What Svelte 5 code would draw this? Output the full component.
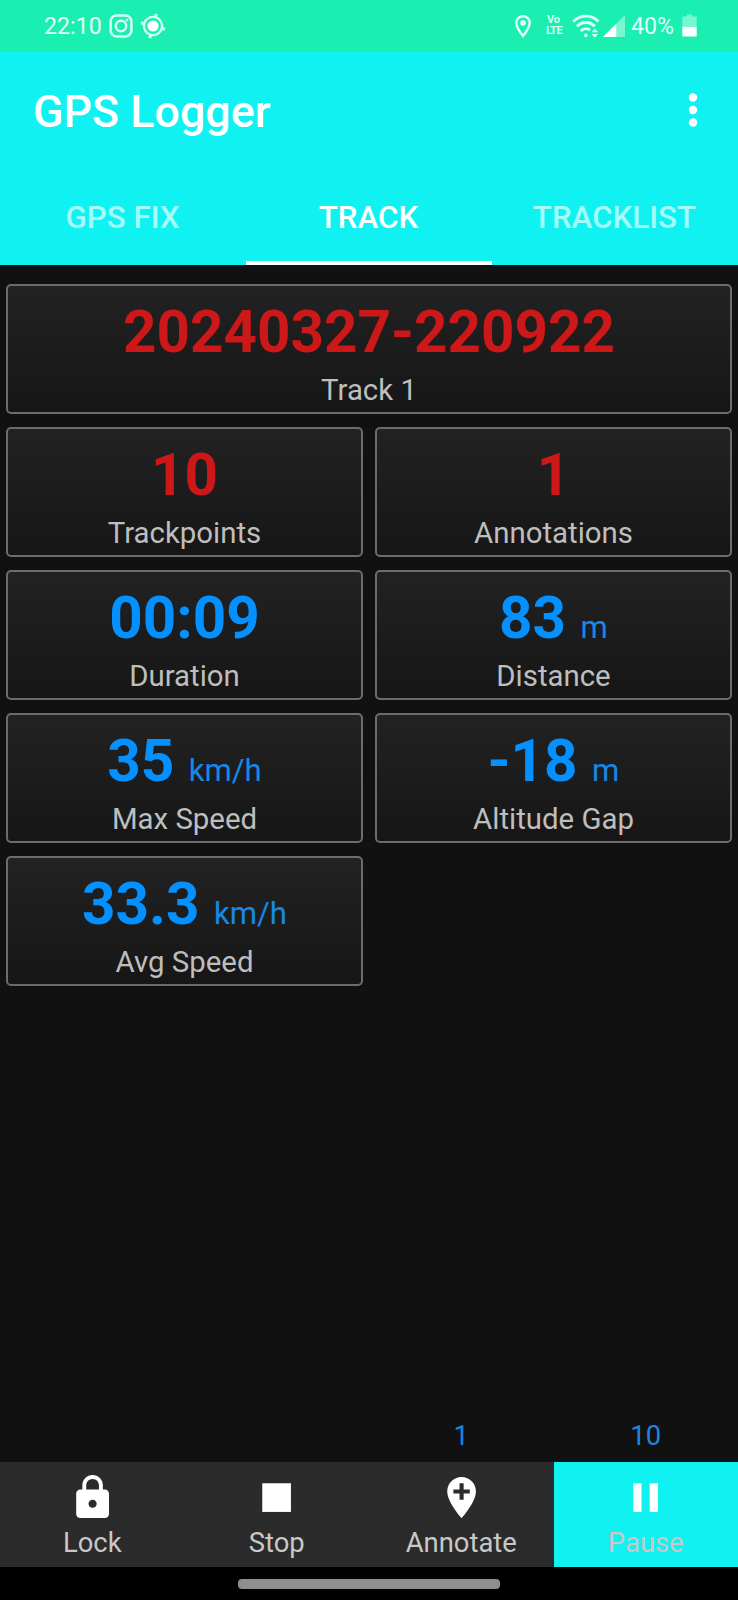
<script>
  const tabs = ['GPS FIX', 'TRACK', 'TRACKLIST'];
  const active = 'TRACK';

  const tiles = [
    { value: '20240327-220922', label: 'Track 1', tone: 'red', wide: true },
    { value: '10', label: 'Trackpoints', tone: 'red' },
    { value: '1', label: 'Annotations', tone: 'red' },
    { value: '00:09', label: 'Duration' },
    { value: '83', unit: 'm', label: 'Distance' },
    { value: '35', unit: 'km/h', label: 'Max Speed' },
    { value: '-18', unit: 'm', label: 'Altitude Gap' },
    { value: '33.3', unit: 'km/h', label: 'Avg Speed' }
  ];

  const actions = [
    {
      label: 'Lock',
      path: 'M18 8h-1V6c0-2.76-2.24-5-5-5S7 3.24 7 6v2H6c-1.1 0-2 .9-2 2v10c0 1.1.9 2 2 2h12c1.1 0 2-.9 2-2V10c0-1.1-.9-2-2-2zm-6 9c-1.1 0-2-.9-2-2s.9-2 2-2 2 .9 2 2-.9 2-2 2zm3.1-9H8.9V6c0-1.71 1.39-3.1 3.1-3.1s3.1 1.39 3.1 3.1v2z'
    },
    { label: 'Stop', path: 'M5 5h14v14H5z' },
    {
      label: 'Annotate',
      count: '1',
      path: 'M12 2C8.13 2 5 5.13 5 9c0 5.25 7 13 7 13s7-7.75 7-13c0-3.87-3.13-7-7-7zm4 8h-3v3h-2v-3H8V8h3V5h2v3h3v2z'
    },
    { label: 'Pause', count: '10', on: true, path: 'M6 19h4V5H6v14zm8-14v14h4V5h-4z' }
  ];
</script>

<div class="screen">
  <div class="status">
    <div class="group">
      <span class="stext">22:10</span>
      <svg class="insta" width="24" height="24" viewBox="0 0 24 24" fill="none" stroke="#d6fff3" stroke-width="2.5">
        <rect x="1.6" y="1.6" width="20.8" height="20.8" rx="5.8" />
        <circle cx="12" cy="12" r="5.2" />
        <circle cx="18" cy="6" r="1.5" fill="#d6fff3" stroke="none" />
      </svg>
      <svg width="26" height="26" viewBox="-13 -13 26 26">
        <g transform="rotate(15)" stroke="#d6fff3">
          <circle r="9.1" fill="none" stroke-width="2.3" />
          <path d="M0-12.5v3M0 12.5v-3M-12.5 0h3M12.5 0h-3" stroke-width="3" />
        </g>
        <circle r="5.6" fill="#fff" />
      </svg>
    </div>
    <div class="group">
      <svg class="pin" width="16" height="24" viewBox="0 0 16 24">
        <path d="M8 2.2c-3.900 0-6.700 2.900-6.700 6.600C1.300 13.600 8 22 8 22s6.700-8.400 6.700-13.200c0-3.700-2.800-6.600-6.700-6.600z" fill="none" stroke="#e0fff6" stroke-width="2.4" />
        <circle cx="8" cy="8.800" r="2.900" fill="#e0fff6" />
      </svg>
      <span class="volte"><b>Vo</b><b>LTE</b></span>
      <svg class="wifi" width="28" height="24" viewBox="0 0 28 24">
        <g fill="none" stroke="#e0fff6" stroke-width="2.9">
          <path d="M1.400 7.400a17.500 17.500 0 0 1 25 0" />
          <path d="M5 12.300a12.300 12.300 0 0 1 17.800 0" />
          <path d="M8.800 17a7.400 7.400 0 0 1 9.200-1" />
        </g>
        <circle cx="13.800" cy="21.400" r="1.800" fill="#e0fff6" />
        <path d="M19.600 18.300l3.200-3.700 3.200 3.700zM19.600 20l3.200 3.700 3.200-3.700z" fill="#e0fff6" />
      </svg>
      <svg class="signal" width="22" height="22" viewBox="0 0 22 22">
        <path d="M22 0v22H0z" fill="#79f6d0" />
        <path d="M13.300 8.700V22H0z" fill="#fff" />
      </svg>
      <span class="stext">40%</span>
      <svg class="battery" width="15" height="23" viewBox="0 0 15 23">
        <path d="M.3 2.500H5V.5h5v2h4.700V13H.3z" fill="#79f6d0" />
        <path d="M.3 13h14.400v9.500H.3z" fill="#fff" />
      </svg>
    </div>
  </div>

  <header>
    <div class="toolbar">
      <h1>GPS Logger</h1>
      <svg width="10" height="36" viewBox="0 0 10 36" fill="#fff">
        <circle cx="5" cy="5.500" r="4.200" />
        <circle cx="5" cy="18" r="4.200" />
        <circle cx="5" cy="30.500" r="4.200" />
      </svg>
    </div>
    <nav class="tabs">
      {#each tabs as tab}
        <div class="tab" class:active={tab === active}>{tab}</div>
      {/each}
    </nav>
  </header>

  <main>
    {#each tiles as tile}
      <section class="tile {tile.tone ?? 'blue'}" class:wide={tile.wide}>
        <div class="reading">
          <span class="value">{tile.value}</span>{#if tile.unit}<span class="unit">{tile.unit}</span>{/if}
        </div>
        <div class="label">{tile.label}</div>
      </section>
    {/each}
  </main>

  <div class="counts">
    {#each actions as action}
      <span>{action.count ?? ''}</span>
    {/each}
  </div>

  <footer>
    {#each actions as action}
      <div class="action" class:on={action.on}>
        <svg width="49.2" height="49.2" viewBox="0 0 24 24" fill="#fff"><path d={action.path} /></svg>
        <span>{action.label}</span>
      </div>
    {/each}
  </footer>

  <div class="gesture"><i></i></div>
</div>

<style>
  :global(body) {
    margin: 0;
    background: #111;
  }
  .screen {
    width: 738px;
    height: 1600px;
    display: flex;
    flex-direction: column;
    overflow: hidden;
    background: #111;
    font-family: Roboto, sans-serif;
  }
  .status {
    height: 52px;
    flex: none;
    box-sizing: border-box;
    display: flex;
    justify-content: space-between;
    padding: 0 41px 1px 44px;
    background: #1aeeb1;
    color: #e0fff6;
  }
  .group {
    display: flex;
    align-items: center;
  }
  .stext {
    font-size: 23.2px;
    line-height: 27px;
    padding-top: 1px;
  }
  .insta {
    margin: 0 7px 0 7px;
  }
  .pin {
    margin-right: 15px;
  }
  .volte {
    display: flex;
    flex-direction: column;
    width: 19px;
    margin-right: 7px;
    font-size: 11px;
    line-height: 10.5px;
    letter-spacing: -0.5px;
  }
  .volte b {
    font-weight: 600;
  }
  .volte b:first-child {
    padding-left: 1px;
    letter-spacing: 0;
  }
  .signal {
    margin: 0 6px 0 3px;
  }
  .battery {
    margin-left: 8px;
  }
  header {
    height: 213px;
    flex: none;
    display: flex;
    flex-direction: column;
    background: #10f2f2;
    color: #fff;
  }
  .toolbar {
    height: 115px;
    display: flex;
    align-items: center;
    justify-content: space-between;
    padding: 0 40px 0 33px;
  }
  h1 {
    margin: 5px 0 0;
    font-size: 44.8px;
    line-height: 52px;
    font-weight: 500;
  }
  .tabs {
    flex: 1;
    display: grid;
    grid-template-columns: repeat(3, 1fr);
  }
  .tab {
    box-sizing: border-box;
    padding: 33px 1px 0 0;
    font-size: 31.3px;
    line-height: 36px;
    font-weight: 500;
    text-align: center;
    color: #a5fafa;
    border-bottom: 4px solid transparent;
  }
  .tab.active {
    color: #fff;
    border-color: #fff;
  }
  main {
    flex: 1;
    display: grid;
    grid-template-columns: 1fr 1fr;
    grid-auto-rows: 130.4px;
    align-content: start;
    gap: 12.5px 12px;
    padding: 19px 6px 0;
  }
  .tile {
    box-sizing: border-box;
    border: 2px solid #6c6c6c;
    border-radius: 5px;
    background: linear-gradient(#222, #161616);
    text-align: center;
    padding-top: 12px;
  }
  .wide {
    grid-column: 1 / -1;
  }
  .reading {
    height: 68px;
    line-height: 68px;
    white-space: nowrap;
  }
  .value {
    font-size: 58.4px;
    font-weight: 700;
  }
  .unit {
    margin-left: 14.5px;
    font-size: 31.1px;
    color: #1589e8;
  }
  .red {
    color: #cc1818;
  }
  .blue {
    color: #0590ff;
  }
  .label {
    margin-top: 7px;
    font-size: 29.4px;
    line-height: 34px;
    color: #bebebe;
  }
  .counts,
  footer {
    flex: none;
    display: grid;
    grid-template-columns: repeat(4, 1fr);
    text-align: center;
    font-size: 27.4px;
    line-height: 32px;
  }
  .counts {
    height: 42px;
    color: #1a86e0;
  }
  footer {
    height: 104.500px;
    color: #c8c8c8;
  }
  .action {
    display: flex;
    flex-direction: column;
    align-items: center;
    padding-top: 10.500px;
    background: #2b2b2b;
  }
  .action svg {
    flex: none;
  }
  .action.on {
    background: #10f2f2;
  }
  .action span {
    margin-top: 5px;
  }
  .gesture {
    height: 33.500px;
    flex: none;
    display: flex;
    justify-content: center;
    background: #000;
  }
  .gesture i {
    width: 262px;
    height: 10px;
    margin-top: 12px;
    border-radius: 4px;
    background: #8e8e8e;
  }
</style>
